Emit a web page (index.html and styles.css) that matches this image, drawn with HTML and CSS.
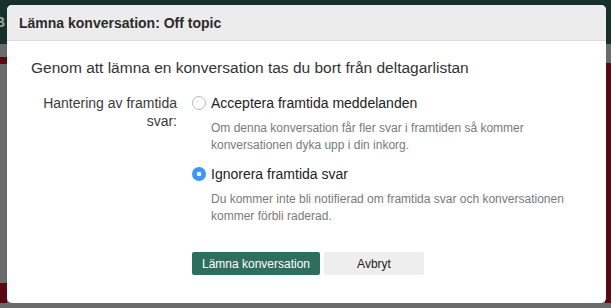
FILE: index.html
```html
<!DOCTYPE html>
<html lang="sv">
<head>
<meta charset="utf-8">
<title>Lämna konversation</title>
<link rel="stylesheet" href="styles.css">
</head>
<body>
<div class="page">
  <div class="topbar"><span class="topbar-letter">B</span></div>
  <div class="main">
    <div class="side side-left">
      <div class="gap g1"></div>
      <div class="red r1"></div>
      <div class="gap grow"></div>
      <div class="red r2"></div>
      <div class="gap g5"></div>
    </div>
    <div class="side side-right">
      <div class="gap g2"></div>
      <div class="red grow"></div>
      <div class="gap g5"></div>
    </div>
  </div>
</div>

<div class="modal">
  <div class="modal-header">
    <h1 class="modal-title">Lämna konversation: Off topic</h1>
  </div>
  <div class="modal-body">
    <p class="intro">Genom att lämna en konversation tas du bort från deltagarlistan</p>
    <div class="form-row">
      <div class="form-label">Hantering av framtida svar:</div>
      <div class="form-options">
        <div class="option">
          <label class="option-label"><span class="radio"></span>Acceptera framtida meddelanden</label>
          <p class="help">Om denna konversation får fler svar i framtiden så kommer konversationen dyka upp i din inkorg.</p>
        </div>
        <div class="option option-second">
          <label class="option-label"><span class="radio radio-checked"></span>Ignorera framtida svar</label>
          <p class="help">Du kommer inte bli notifierad om framtida svar och konversationen kommer förbli raderad.</p>
        </div>
        <div class="buttons">
          <button class="btn btn-primary">Lämna konversation</button>
          <button class="btn btn-secondary">Avbryt</button>
        </div>
      </div>
    </div>
  </div>
</div>
</body>
</html>
```

FILE: styles.css
```css
html, body {
  margin: 0;
  padding: 0;
}
body {
  width: 611px;
  height: 308px;
  overflow: hidden;
  position: relative;
  background: #6b6b6b;
  font-family: "Liberation Sans", Arial, Helvetica, sans-serif;
}
.page {
  display: flex;
  flex-direction: column;
  height: 308px;
}
.topbar {
  height: 44px;
  background: #16302a;
  overflow: hidden;
}
.topbar-letter {
  display: block;
  margin-left: -5px;
  margin-top: 14px;
  font-size: 14px;
  font-weight: bold;
  color: #9aa5a0;
}
.main {
  flex: 1;
  display: flex;
  justify-content: space-between;
}
.side {
  display: flex;
  flex-direction: column;
}
.side-left { width: 7px; }
.side-right { width: 6px; }
.gap { background: #6b6b6b; }
.red { background: #5c0812; }
.g1 { height: 13px; }
.r1 { height: 7px; }
.r2 { height: 20px; }
.g2 { height: 19px; }
.g5 { height: 5px; }
.grow { flex: 1; }

.modal {
  position: absolute;
  left: 7px;
  top: 5px;
  width: 599px;
  height: 298px;
  background: #fff;
  border-radius: 5px;
  overflow: hidden;
  display: flex;
  flex-direction: column;
}
.modal-header {
  height: 36px;
  background: #ececec;
  border-bottom: 1px solid #dcdcdc;
  display: flex;
  align-items: center;
  padding: 0 12px;
  box-sizing: border-box;
}
.modal-title {
  margin: 0;
  font-size: 14px;
  font-weight: bold;
  color: #2b2b2b;
}
.modal-body {
  padding: 17px 24px 0 24px;
}
.intro {
  margin: 0;
  font-size: 15.5px;
  line-height: 20px;
  color: #333;
}
.form-row {
  display: flex;
  margin-top: 16px;
}
.form-label {
  width: 146px;
  flex: none;
  text-align: right;
  font-size: 14px;
  line-height: 18px;
  color: #3a3a3a;
}
.form-options {
  margin-left: 15px;
  flex: 1;
}
.option-label {
  display: flex;
  align-items: center;
  font-size: 14px;
  line-height: 18px;
  color: #222;
}
.radio {
  width: 14px;
  height: 14px;
  box-sizing: border-box;
  border-radius: 50%;
  border: 1px solid #b9b9b9;
  background: #fff;
  margin-right: 5px;
  flex: none;
}
.radio-checked {
  border: none;
  background: radial-gradient(circle, #fff 0 2px, #3c97f5 2.6px);
}
.help {
  margin: 8px 0 0 19px;
  max-width: 360px;
  font-size: 12px;
  line-height: 17px;
  color: #7a7a7a;
}
.option-second {
  margin-top: 11px;
}
.buttons {
  display: flex;
  gap: 4px;
  margin-top: 27px;
}
.btn {
  height: 23px;
  border: none;
  border-radius: 2px;
  font-family: "Liberation Sans", Arial, Helvetica, sans-serif;
  font-size: 12px;
  padding: 0;
}
.btn-primary {
  width: 128px;
  background: #2e6e5d;
  color: #fff;
}
.btn-secondary {
  width: 100px;
  background: #eeeeee;
  color: #222;
}
```
